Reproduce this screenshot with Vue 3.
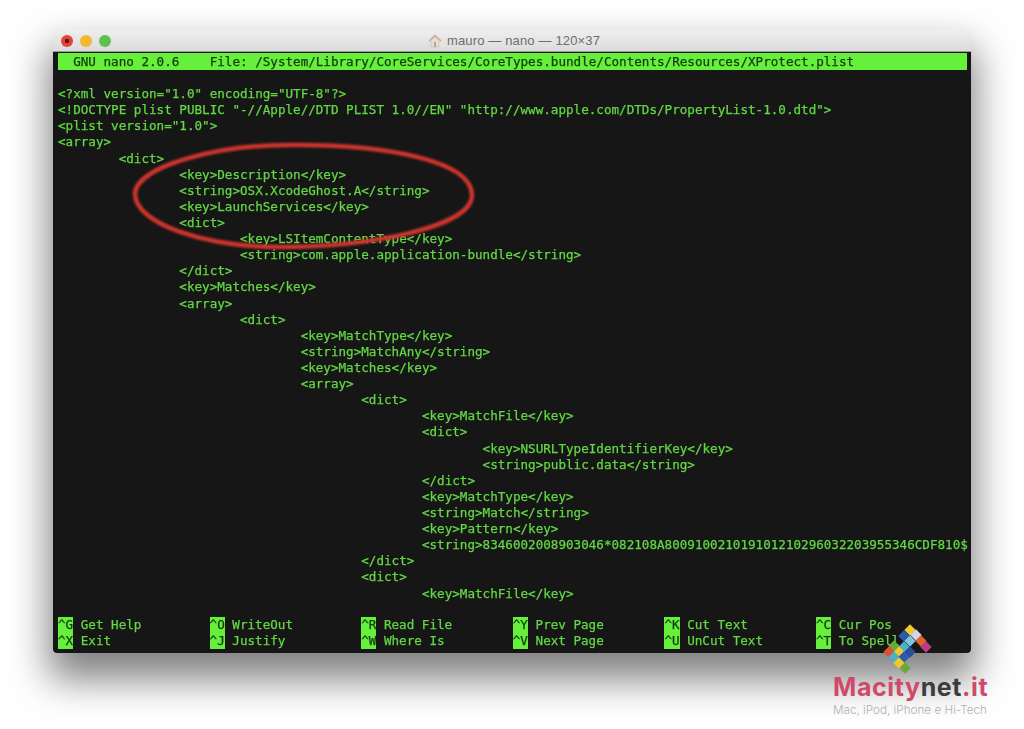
<script setup>
const statusText = '  GNU nano 2.0.6    File: /System/Library/CoreServices/CoreTypes.bundle/Contents/Resources/XProtect.plist'
const lines = [
  '',
  '<?xml version="1.0" encoding="UTF-8"?>',
  '<!DOCTYPE plist PUBLIC "-//Apple//DTD PLIST 1.0//EN" "http://www.apple.com/DTDs/PropertyList-1.0.dtd">',
  '<plist version="1.0">',
  '<array>',
  '        <dict>',
  '                <key>Description</key>',
  '                <string>OSX.XcodeGhost.A</string>',
  '                <key>LaunchServices</key>',
  '                <dict>',
  '                        <key>LSItemContentType</key>',
  '                        <string>com.apple.application-bundle</string>',
  '                </dict>',
  '                <key>Matches</key>',
  '                <array>',
  '                        <dict>',
  '                                <key>MatchType</key>',
  '                                <string>MatchAny</string>',
  '                                <key>Matches</key>',
  '                                <array>',
  '                                        <dict>',
  '                                                <key>MatchFile</key>',
  '                                                <dict>',
  '                                                        <key>NSURLTypeIdentifierKey</key>',
  '                                                        <string>public.data</string>',
  '                                                </dict>',
  '                                                <key>MatchType</key>',
  '                                                <string>Match</string>',
  '                                                <key>Pattern</key>',
  '                                                <string>8346002008903046*082108A800910021019101210296032203955346CDF810$',
  '                                        </dict>',
  '                                        <dict>',
  '                                                <key>MatchFile</key>',
]
const menu = [
  [['^G', 'Get Help'], ['^O', 'WriteOut'], ['^R', 'Read File'], ['^Y', 'Prev Page'], ['^K', 'Cut Text'], ['^C', 'Cur Pos']],
  [['^X', 'Exit'], ['^J', 'Justify'], ['^W', 'Where Is'], ['^V', 'Next Page'], ['^U', 'UnCut Text'], ['^T', 'To Spell']],
]
const tiles = [
  [910, 630, '#f2c832'], [904, 636, '#2a5cab'], [916, 635, '#d8d4e4'], [910, 641, '#7cc4e0'],
  [921, 641, '#e0622c'], [926, 647, '#b83c86'], [904, 647, '#4cb0c8'], [910, 652, '#24509c'],
  [894, 646, '#6aa83c'], [899, 652, '#f2c832'], [889, 652, '#e0502c'], [894, 657, '#4cb0c8'],
  [904, 657, '#2a5cab'], [899, 663, '#f2c832'], [905, 668, '#6aa83c'],
]
</script>

<template>
  <div class="page">
    <div class="window">
      <div class="titlebar">
        <div class="lights">
          <span class="light red"></span>
          <span class="light yellow"></span>
          <span class="light green"></span>
        </div>
        <div class="title">
          <svg class="home" width="14" height="14" viewBox="0 0 14 14">
            <path d="M1 7 7 1.5 13 7" fill="none" stroke="#c9a78e" stroke-width="1.3" />
            <path d="M3 6.5V13h8V6.5L7 3z" fill="#e8ddd0" stroke="#c8bcae" stroke-width=".6" />
            <rect x="6" y="8" width="2" height="5" fill="#b9a58f" />
          </svg>
          <span>mauro — nano — 120×37</span>
        </div>
      </div>
      <div class="terminal">
        <div class="statusbar">{{ statusText }}</div>
        <div class="code">
          <div v-for="(line, i) in lines" :key="i" class="row">{{ line }}</div>
        </div>
        <div class="menu">
          <div v-for="(row, r) in menu" :key="r" class="menu-row">
            <div v-for="item in row" :key="item[0]" class="menu-item">
              <span class="shortcut">{{ item[0] }}</span>
              <span class="label">{{ item[1] }}</span>
            </div>
          </div>
        </div>
      </div>
    </div>

    <svg class="circle" width="360" height="124" viewBox="0 0 360 124">
      <path
        d="M9 57C12 30 90 9 164 9C260 8 346 25 346 59C346 92 240 111 154 111C80 111 8 88 9 57Z"
        fill="none" stroke="#cf352e" stroke-width="4.5" />
    </svg>

    <svg class="tiles" width="90" height="80" viewBox="860 620 90 80">
      <rect v-for="(t, i) in tiles" :key="i" :x="t[0] - 4" :y="t[1] - 4" width="8" height="8"
        :fill="t[2]" :transform="`rotate(45 ${t[0]} ${t[1]})`" />
    </svg>

    <div class="brand">
      <div class="brand-name">Macity<span class="dark">net</span>.it</div>
      <div class="brand-sub">Mac, iPod, iPhone e Hi-Tech</div>
    </div>
  </div>
</template>

<style scoped>
.page {
  position: relative;
  width: 1024px;
  height: 729px;
  padding: 29px 53px 0;
  box-sizing: border-box;
  overflow: hidden;
  background: #fff;
}
.window {
  width: 918px;
  height: 624px;
  border-radius: 5px 5px 4px 4px;
  overflow: hidden;
  display: flex;
  flex-direction: column;
  box-shadow: 0 22px 38px 4px rgba(0, 0, 0, .5);
}
.titlebar {
  height: 23px;
  flex: none;
  display: flex;
  align-items: center;
  position: relative;
  padding-top: 1px;
  background: linear-gradient(#efefef, #dcdcdc);
  border-bottom: 1px solid #9a9a9a;
  box-sizing: border-box;
}
.lights {
  display: flex;
  gap: 7px;
  padding-left: 8px;
}
.light {
  width: 12px;
  height: 12px;
  border-radius: 50%;
}
.red { background: radial-gradient(circle, #5a1412 0 2px, #e9403a 2.5px); }
.yellow { background: #f4b733; }
.green { background: #5cc24e; }
.title {
  position: absolute;
  left: 0;
  right: 0;
  top: 1px;
  bottom: 0;
  display: flex;
  justify-content: center;
  align-items: center;
  gap: 5px;
  font: 13px "Liberation Sans", Arial, sans-serif;
  letter-spacing: .15px;
  color: #6e6e6e;
  padding-left: 4px;
}
.home { flex: none; }
.terminal {
  flex: 1;
  background: #161616;
  padding: 1px 4px 0 5px;
  font-family: "DejaVu Sans Mono", monospace;
  font-size: 12.6px;
  line-height: 16.12px;
  color: #63d845;
  -webkit-text-stroke: .25px;
  display: flex;
  flex-direction: column;
  filter: blur(.35px);
}
.statusbar {
  background: #66f03c;
  color: #143a10;
  white-space: pre;
  height: 17px;
  line-height: 17px;
}
.code { flex: 1; }
.row {
  white-space: pre;
  height: 16.12px;
}
.menu { padding-bottom: 4px; }
.menu-row {
  display: grid;
  grid-template-columns: repeat(6, 151.6px);
  height: 16.12px;
}
.menu-item {
  white-space: pre;
  display: flex;
  gap: 7.6px;
}
.shortcut {
  background: #66f03c;
  color: #143a10;
  height: 16.12px;
}
.circle {
  position: absolute;
  left: 126px;
  top: 136px;
  filter: blur(.8px);
}
.tiles {
  position: absolute;
  left: 860px;
  top: 620px;
  filter: blur(.4px);
}
.brand {
  position: absolute;
  left: 833px;
  top: 674px;
  width: 156px;
  font-family: "Inter", "Liberation Sans", sans-serif;
}
.brand-name {
  font-size: 25px;
  line-height: 26px;
  font-weight: 700;
  color: #cf4a6a;
  white-space: nowrap;
  letter-spacing: .6px;
}
.dark { color: #3c3c3e; }
.brand-sub {
  font-size: 11.7px;
  line-height: 14px;
  font-weight: 300;
  color: #b0b0b0;
  white-space: nowrap;
  margin-top: 3px;
}
</style>
